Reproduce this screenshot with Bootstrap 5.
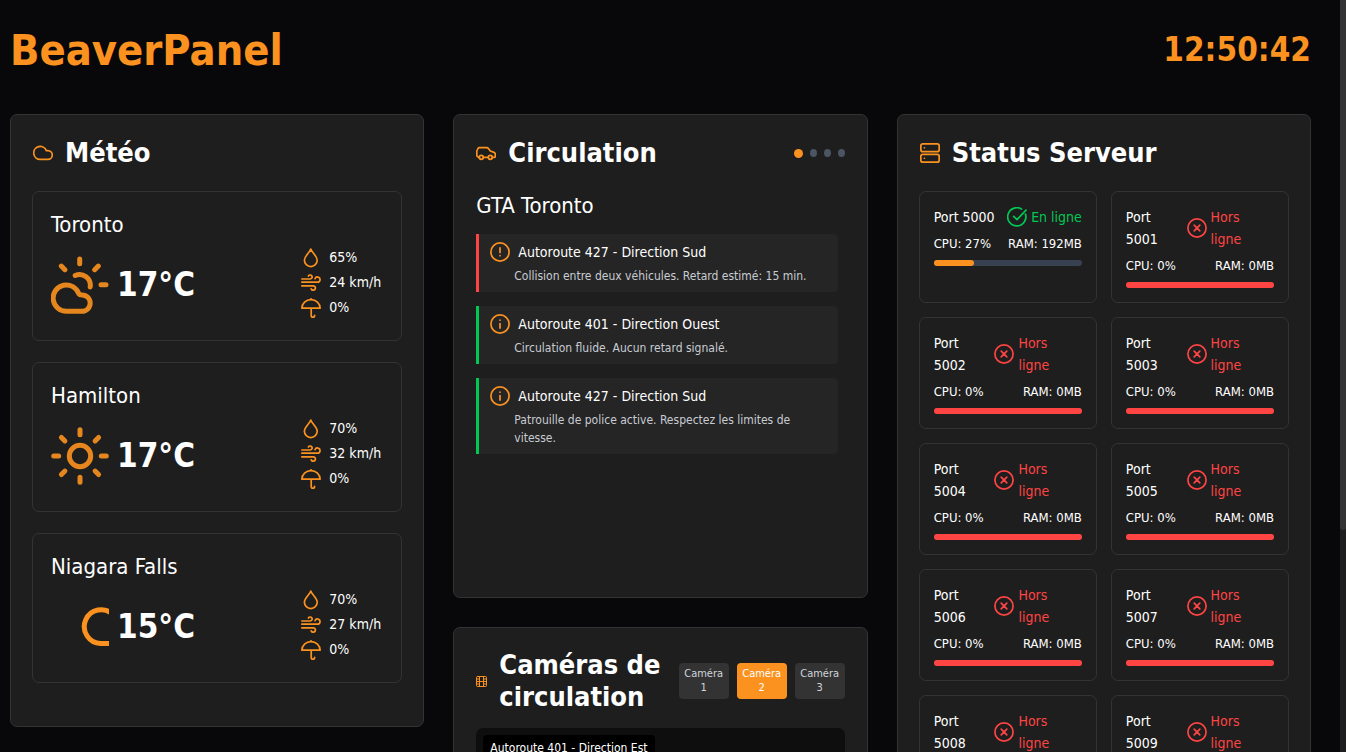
<!DOCTYPE html>
<html lang="fr" data-bs-theme="dark">
<head>
<meta charset="utf-8">
<meta name="viewport" content="width=device-width, initial-scale=1">
<title>BeaverPanel</title>
<link href="https://cdn.jsdelivr.net/npm/bootstrap@5.3.0/dist/css/bootstrap.min.css" rel="stylesheet">
<style>
:root{--accent:#fb9220;--panel:#1e1e1e;--line:#333;--ok:#00c853;--bad:#ff4444}
body{background:#08080a;color:#fff;font-family:"DejaVu Sans Condensed","DejaVu Sans",sans-serif;font-size:14px;line-height:22px}
h1,h2,h3,h4,p,ul{margin:0}
svg{display:block;flex:none;fill:none;stroke:currentColor;stroke-width:1.7;stroke-linecap:round;stroke-linejoin:round}
.icon{width:20px;height:20px}
.icon-film{width:11px;height:11px;stroke-width:1}
.accent{color:var(--accent)}
.scroll-view{height:100vh}
.page{padding:22px 29px 29px 10px}
.rail{width:6px;background:#1e1e1e}
.rail-thumb{height:70.5%;background:#333;border-radius:0 0 3px 3px}
.page-head{margin-bottom:36px}
.brand{font-size:43px;line-height:56px;font-weight:700}
.clock{font-size:33px;line-height:56px;font-weight:700}
.board{grid-template-columns:repeat(auto-fit,minmax(360px,1fr));gap:29px}
.stack{gap:29px}
.panel{background:var(--panel);border:1px solid var(--line);border-radius:7px;padding:21px}
.panel-head{gap:12px;margin-bottom:21px;padding:0 1px}
.panel-head.tight{margin-bottom:15px}
.panel-title{font-size:27px;line-height:34px;font-weight:700}
.tight .panel-title{line-height:32px}
.tile{border:1px solid var(--line);border-radius:7px}
.cities{gap:21px;margin-bottom:22px}
.city{padding:18px}
.city-name{font-size:22px;line-height:30px;margin-bottom:7px}
.sky{width:58px;height:58px;stroke-width:5}
.sky-soft{opacity:.9}
.temp{font-size:33px;line-height:40px;font-weight:700}
.metrics{gap:4px;padding-bottom:4px;min-width:82px}
.metrics li{line-height:21px;gap:8px}
.dots{gap:7px}
.pager{width:7px;height:8px;border:0;padding:0;border-radius:50%;background:#4b5563}
.pager.current{width:9px;height:9px;background:var(--accent)}
.zone-name{font-size:22px;line-height:29px;margin-bottom:14px;padding:0 1px}
.alerts{min-height:342px;gap:14px;padding:0 8px 0 1px}
.road{background:#252525;border-left:3px solid var(--ok);border-radius:0 4px 4px 0;padding:7px 11px}
.road.jam{border-color:var(--bad)}
.road-head{gap:8px;margin-bottom:4px}
.road-name{font-size:14px;line-height:22px;font-weight:400}
.road-text{font-size:12px;line-height:18px;color:#c8ccd3;padding-left:24px}
.cams{gap:8px}
.cam{width:50px;padding:4px;font-size:11px;line-height:14px;color:#d1d5db;background:#333;border:0;border-radius:4px}
.cam.current{background:var(--accent);color:#fff}
.video{height:240px;margin:0 1px;background:#0e0e0e;border-radius:7px;padding:7px}
.video-label{background:#000;border-radius:4px;padding:4px 7px;font-size:12px;line-height:18px}
.servers{grid-template-columns:1fr 1fr;gap:14px}
.server{padding:14px}
.server-top{margin-bottom:7px}
.state{gap:4px}
.online{color:var(--ok)}
.offline{color:var(--bad)}
.load{font-size:13px;line-height:18px;margin-bottom:7px}
.meter-track{height:6px;border-radius:3px;background:#374151}
.meter-fill{background:var(--accent);border-radius:3px}
.meter-fill.down{background:var(--bad)}
</style>
</head>
<body>
<svg class="d-none" aria-hidden="true">
<symbol id="i-cloud" viewBox="0 0 20 20"><path d="M7.2 16.4a6.5 6.5 0 1 1 6.1-8.8h1.6a4.4 4.4 0 0 1 0 8.8z"/></symbol>
<symbol id="i-car" viewBox="0 0 20 20"><path d="M3.3 14.3H2.5L.8 12.8V8L2 5.5c.3-.5.7-.8 1.3-.8h7.2c.9 0 1.6.3 2.1 1L14.3 8l3.7 1.400c.8.3 1.3 1 1.3 1.800v2.100c0 .6-.4 1-1 1h-2M7.300 14.300h5"/><circle cx="5.300" cy="14.300" r="2"/><circle cx="14.300" cy="14.300" r="2"/></symbol>
<symbol id="i-server" viewBox="0 0 20 20"><rect x=".85" y=".85" width="18.300" height="7.800" rx="2"/><rect x=".85" y="11.350" width="18.300" height="7.800" rx="2"/><path d="M4.400 4.750h.01M4.400 15.250h.01"/></symbol>
<symbol id="i-film" viewBox="0 0 11 11"><rect x=".5" y=".5" width="10" height="10" rx="1"/><path d="M3.500 .5v10M7.500 .5v10M3.500 5.500h4M.5 3H3.500M.5 5.500H3.500M.5 8H3.500M7.500 3h3M7.500 5.500h3M7.500 8h3"/></symbol>
<symbol id="i-drop" viewBox="0 0 20 20"><path d="M9.800 1C9 4.400 3.400 8 3.400 12.200a6.400 6.400 0 0 0 12.800 0C16.200 8 10.600 4.400 9.800 1z"/></symbol>
<symbol id="i-wind" viewBox="0 0 20 20"><path d="M.8 6h8.400a2 2 0 1 0-1.800-3M.8 9.200h15.700a2.600 2.600 0 1 0-2.500-3.500M.8 12.800h11.400a2.200 2.200 0 1 1-2 3.100"/></symbol>
<symbol id="i-umbrella" viewBox="0 0 20 20"><path d="M10 .8v.8M.9 10.200a9.100 8.600 0 0 1 18.200 0zM10.200 10.200v7.200a1.700 1.700 0 0 0 3.400 0"/></symbol>
<symbol id="i-alert" viewBox="0 0 20 20"><circle cx="10" cy="10" r="9.100"/><path d="M10 5.800v4.700M10 13.700v.01"/></symbol>
<symbol id="i-info" viewBox="0 0 20 20"><circle cx="10" cy="10" r="9.100"/><path d="M10 9.600v4.500M10 6.200v.01"/></symbol>
<symbol id="i-check" viewBox="0 0 20 20"><path d="M18.500 7.200A9.100 9.100 0 1 1 14.600 2.100M6.700 9.300l3.300 3.300L19 3.200"/></symbol>
<symbol id="i-cross" viewBox="0 0 20 20"><circle cx="10" cy="10" r="9.100"/><path d="M7.200 7.200l5.600 5.600M12.800 7.200l-5.600 5.600"/></symbol>
<symbol id="i-partly" viewBox="0 0 58 58"><path d="M15.700 55.300a13.200 13.200 0 1 1 12.200-17.400c.5.800 1.200 1 3.100 1a8.200 8.200 0 0 1 0 16.400zM24.200 19.500a10.800 10.800 0 0 1 15 11.500M28.700 3v4.700M10.300 10.100l3.600 3.600M47.300 10.100l-3.600 3.600M50 28.800h5"/></symbol>
<symbol id="i-sun" viewBox="0 0 58 58"><circle cx="29" cy="29" r="10.700"/><path d="M29 2.700v5M29 50.300v5M2.700 29h5M50.300 29h5M10.400 10.400l3.500 3.500M44.100 44.100l3.500 3.500M10.400 47.600l3.500-3.500M44.100 13.900l3.500-3.500"/></symbol>
<symbol id="i-moon" viewBox="0 0 58 58"><path d="M62 16.500A16.900 16.900 0 1 0 49.700 45.500h12"/></symbol>
</svg>

<div class="scroll-view d-flex overflow-hidden">
<main class="page flex-grow-1 overflow-hidden">
  <header class="page-head d-flex justify-content-between align-items-start">
    <h1 class="brand accent">BeaverPanel</h1>
    <time class="clock accent">12:50:42</time>
  </header>

  <div class="board d-grid align-items-start">
    <section class="panel">
      <div class="panel-head d-flex align-items-center">
        <svg class="icon accent"><use href="#i-cloud"/></svg>
        <h2 class="panel-title">Météo</h2>
      </div>
      <div class="cities d-flex flex-column" id="cities"></div>
    </section>

    <div class="stack d-flex flex-column">
      <section class="panel">
        <div class="panel-head d-flex align-items-center">
          <svg class="icon accent"><use href="#i-car"/></svg>
          <h2 class="panel-title">Circulation</h2>
          <div class="dots d-flex align-items-center ms-auto">
            <button type="button" class="pager current" aria-label="Zone 1"></button>
            <button type="button" class="pager" aria-label="Zone 2"></button>
            <button type="button" class="pager" aria-label="Zone 3"></button>
            <button type="button" class="pager" aria-label="Zone 4"></button>
          </div>
        </div>
        <h3 class="zone-name fw-normal">GTA Toronto</h3>
        <div class="alerts d-flex flex-column">
          <article class="road jam">
            <div class="road-head d-flex align-items-center"><svg class="icon accent"><use href="#i-alert"/></svg><h4 class="road-name">Autoroute 427 - Direction Sud</h4></div>
            <p class="road-text">Collision entre deux véhicules. Retard estimé: 15 min.</p>
          </article>
          <article class="road">
            <div class="road-head d-flex align-items-center"><svg class="icon accent"><use href="#i-info"/></svg><h4 class="road-name">Autoroute 401 - Direction Ouest</h4></div>
            <p class="road-text">Circulation fluide. Aucun retard signalé.</p>
          </article>
          <article class="road">
            <div class="road-head d-flex align-items-center"><svg class="icon accent"><use href="#i-info"/></svg><h4 class="road-name">Autoroute 427 - Direction Sud</h4></div>
            <p class="road-text">Patrouille de police active. Respectez les limites de vitesse.</p>
          </article>
        </div>
      </section>

      <section class="panel">
        <div class="panel-head tight d-flex align-items-center">
          <svg class="icon-film accent"><use href="#i-film"/></svg>
          <h2 class="panel-title">Caméras de circulation</h2>
          <div class="cams d-flex ms-auto">
            <button type="button" class="cam">Caméra 1</button>
            <button type="button" class="cam current">Caméra 2</button>
            <button type="button" class="cam">Caméra 3</button>
          </div>
        </div>
        <div class="video d-flex align-items-start">
          <span class="video-label">Autoroute 401 - Direction Est</span>
        </div>
      </section>
    </div>

    <section class="panel">
      <div class="panel-head d-flex align-items-center">
        <svg class="icon accent"><use href="#i-server"/></svg>
        <h2 class="panel-title">Status Serveur</h2>
      </div>
      <div class="servers d-grid" id="servers"></div>
    </section>
  </div>
</main>
<div class="rail" aria-hidden="true"><div class="rail-thumb"></div></div>
</div>

<script src="https://cdn.jsdelivr.net/npm/bootstrap@5.3.0/dist/js/bootstrap.bundle.min.js"></script>
<script>
const cities = [
  {name: 'Toronto', sky: 'partly', temp: 17, humidity: 65, wind: 24, rain: 0},
  {name: 'Hamilton', sky: 'sun', temp: 17, humidity: 70, wind: 32, rain: 0},
  {name: 'Niagara Falls', sky: 'moon', temp: 15, humidity: 70, wind: 27, rain: 0}
];
const icon = (name, cls = 'icon') => `<svg class="${cls}"><use href="#i-${name}"/></svg>`;
const metric = (name, text) => `<li class="d-flex align-items-center"><span class="accent">${icon(name)}</span>${text}</li>`;
document.getElementById('cities').innerHTML = cities.map(c => `
  <article class="tile city">
    <h3 class="city-name fw-normal">${c.name}</h3>
    <div class="d-flex align-items-center justify-content-between">
      <div class="d-flex align-items-center gap-2">
        ${icon(c.sky, 'sky accent' + (c.sky === 'moon' ? '' : ' sky-soft'))}
        <span class="temp">${c.temp}°C</span>
      </div>
      <ul class="metrics list-unstyled d-flex flex-column">
        ${metric('drop', c.humidity + '%')}${metric('wind', c.wind + ' km/h')}${metric('umbrella', c.rain + '%')}
      </ul>
    </div>
  </article>`).join('');

const servers = Array.from({length: 10}, (_, i) => ({port: 5000 + i, online: i === 0, cpu: i ? 0 : 27, ram: i ? 0 : 192}));
document.getElementById('servers').innerHTML = servers.map(s => `
  <article class="tile server">
    <div class="server-top d-flex align-items-center justify-content-between">
      <span>Port ${s.port}</span>
      <span class="state d-flex align-items-center ${s.online ? 'online' : 'offline'}">${icon(s.online ? 'check' : 'cross')}<span>${s.online ? 'En ligne' : 'Hors ligne'}</span></span>
    </div>
    <div class="load d-flex justify-content-between"><span>CPU: ${s.cpu}%</span><span>RAM: ${s.ram}MB</span></div>
    <div class="meter-track d-flex"><div class="meter-fill ${s.online ? '' : 'down'}" style="width:${s.online ? s.cpu : 100}%"></div></div>
  </article>`).join('');
</script>
</body>
</html>
